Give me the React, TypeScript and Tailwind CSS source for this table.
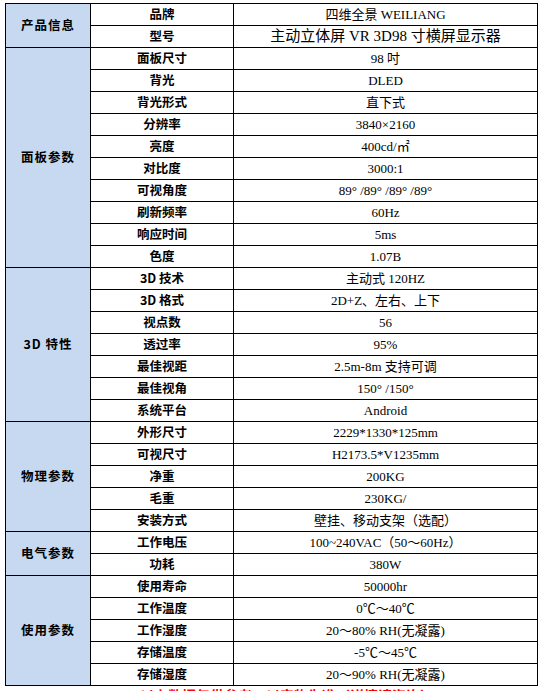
type Row = { name: string; value: string; big?: boolean };
type Group = { title: string; rows: Row[] };

const groups: Group[] = [
  {
    title: "产品信息",
    rows: [
      { name: "品牌", value: "四维全景 WEILIANG" },
      { name: "型号", value: "主动立体屏 VR 3D98 寸横屏显示器", big: true },
    ],
  },
  {
    title: "面板参数",
    rows: [
      { name: "面板尺寸", value: "98 吋" },
      { name: "背光", value: "DLED" },
      { name: "背光形式", value: "直下式" },
      { name: "分辨率", value: "3840×2160" },
      { name: "亮度", value: "400cd/㎡" },
      { name: "对比度", value: "3000:1" },
      { name: "可视角度", value: "89° /89° /89° /89°" },
      { name: "刷新频率", value: "60Hz" },
      { name: "响应时间", value: "5ms" },
      { name: "色度", value: "1.07B" },
    ],
  },
  {
    title: "3D 特性",
    rows: [
      { name: "3D 技术", value: "主动式 120HZ" },
      { name: "3D 格式", value: "2D+Z、左右、上下" },
      { name: "视点数", value: "56" },
      { name: "透过率", value: "95%" },
      { name: "最佳视距", value: "2.5m-8m  支持可调" },
      { name: "最佳视角", value: "150° /150°" },
      { name: "系统平台", value: "Android" },
    ],
  },
  {
    title: "物理参数",
    rows: [
      { name: "外形尺寸", value: "2229*1330*125mm" },
      { name: "可视尺寸", value: "H2173.5*V1235mm" },
      { name: "净重", value: "200KG" },
      { name: "毛重", value: "230KG/" },
      { name: "安装方式", value: "壁挂、移动支架（选配）" },
    ],
  },
  {
    title: "电气参数",
    rows: [
      { name: "工作电压", value: "100~240VAC（50～60Hz）" },
      { name: "功耗", value: "380W" },
    ],
  },
  {
    title: "使用参数",
    rows: [
      { name: "使用寿命", value: "50000hr" },
      { name: "工作温度", value: "0℃～40℃" },
      { name: "工作湿度", value: "20～80% RH(无凝露)" },
      { name: "存储温度", value: "-5℃～45℃" },
      { name: "存储湿度", value: "20～90% RH(无凝露)" },
    ],
  },
];

const sans = "font-['Noto_Sans_CJK_SC',sans-serif]";
const serif = "font-['Liberation_Serif','Noto_Sans_CJK_SC',serif]";

export default function App() {
  return (
    <div className="bg-white min-h-[691px] pl-[5px] pt-[3px] text-black">
      <table className="border-collapse table-fixed w-[532px]">
        <colgroup>
          <col className="w-[85px]" />
          <col className="w-[143px]" />
          <col className="w-[304px]" />
        </colgroup>
        <tbody>
          {groups.map((g) =>
            g.rows.map((r, i) => (
              <tr key={g.title + r.name} className="h-[22px]">
                {i === 0 && (
                  <td
                    rowSpan={g.rows.length}
                    className={`border border-black bg-[#c6d9f1] text-center align-middle text-[12.5px] font-bold tracking-[1px] ${sans}`}
                  >
                    {g.title}
                  </td>
                )}
                <td className={`border border-black text-center align-middle p-0 text-[12.5px] font-bold leading-none ${sans}`}>
                  {r.name}
                </td>
                <td
                  className={`border border-black text-center align-middle p-0 leading-none ${serif} ${
                    r.big ? "text-[15px]" : "text-[13px]"
                  }`}
                >
                  {r.value}
                </td>
              </tr>
            ))
          )}
        </tbody>
      </table>
      <p className={`mt-[2px] pl-[135px] text-[14px] font-bold text-[#ff0000] leading-none ${sans}`}>
        以上数据仅供参考，以实物为准（详情请咨询）
      </p>
    </div>
  );
}
